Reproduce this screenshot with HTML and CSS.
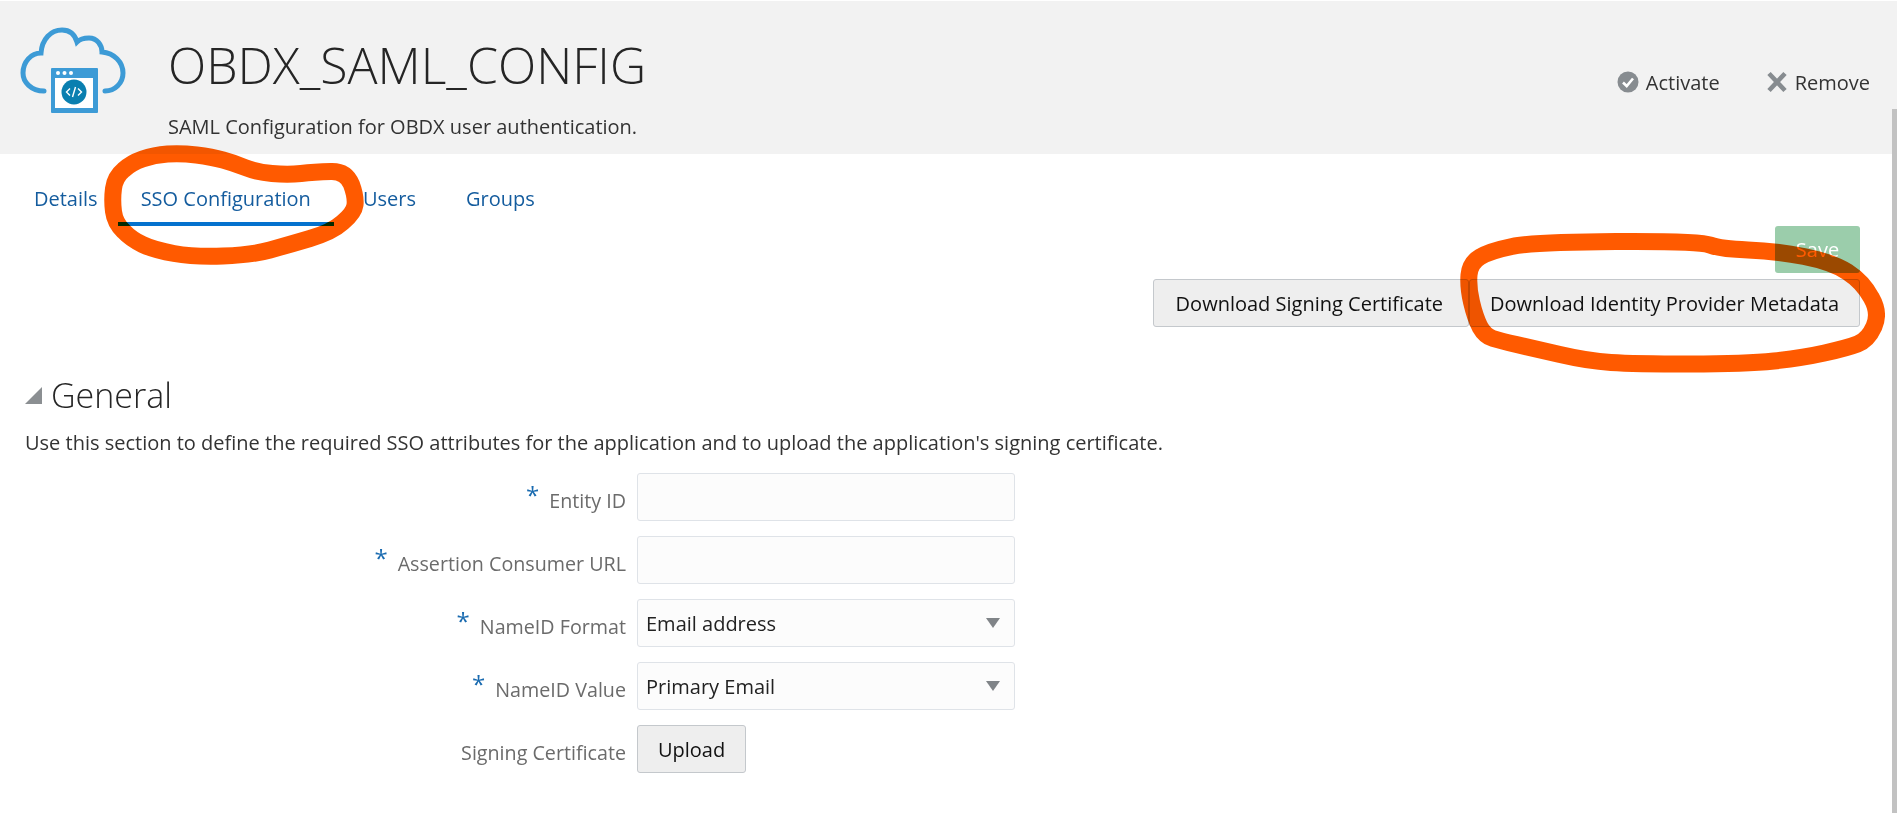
FILE: index.html
```html
<!DOCTYPE html>
<html lang="en">
<head>
    <meta charset="UTF-8">
    <meta name="viewport" content="width=device-width, initial-scale=1.0">
    <title>OBDX_SAML_CONFIG</title>
    <link rel="stylesheet" href="styles.css">
</head>
<body>
    <header class="app-header">
        <svg class="app-icon" viewBox="0 0 130 110" width="130" height="110" aria-hidden="true">
            <path d="M34 76C21 76 13 67 13 58C13 47 21 38 31 38C32 24 41 15 52 15C60 15 65 20 67 27C70 24 75 23 79 23C87 23 92 30 92 37C104 38 113 47 113 58C113 68 105 76 95 76" fill="none" stroke="#3d9bd6" stroke-width="5" stroke-linecap="round"/>
            <rect x="41" y="53" width="47" height="45" rx="1" fill="#3d9bd6"/>
            <rect x="45" y="63" width="38" height="30" fill="#fff"/>
            <circle cx="48" cy="58" r="2" fill="#fff"/>
            <circle cx="54.5" cy="58" r="2" fill="#fff"/>
            <circle cx="61" cy="58" r="2" fill="#fff"/>
            <circle cx="64" cy="77" r="12.5" fill="#0a7fb0"/>
            <path d="M60 73.5L56.5 77L60 80.5M68 73.5L71.5 77L68 80.5M65.5 72L62.5 82" fill="none" stroke="#fff" stroke-width="1.4"/>
        </svg>
        <div class="app-title">
            <h1>OBDX_SAML_CONFIG</h1>
            <p>SAML Configuration for OBDX user authentication.</p>
        </div>
        <div class="app-actions">
            <a class="action" href="#">
                <svg viewBox="0 0 22 22" width="22" height="22" aria-hidden="true">
                    <circle cx="11" cy="11" r="10.5" fill="#878c90"/>
                    <path d="M6 11.5L9.7 15L16 7.5" fill="none" stroke="#fff" stroke-width="2.6"/>
                </svg>
                Activate
            </a>
            <a class="action" href="#">
                <svg viewBox="0 0 22 22" width="22" height="22" aria-hidden="true">
                    <path d="M3 2.5L19 19.5M19 2.5L3 19.5" fill="none" stroke="#878c90" stroke-width="4.6"/>
                </svg>
                Remove
            </a>
        </div>
    </header>

    <nav class="tabs">
        <a class="tab" href="#">Details</a>
        <a class="tab tab-active" href="#">SSO Configuration</a>
        <a class="tab" href="#">Users</a>
        <a class="tab" href="#">Groups</a>
    </nav>

    <div class="toolbar">
        <button class="btn-save" disabled>Save</button>
        <div class="toolbar-row">
            <button class="btn btn-cert">Download Signing Certificate</button>
            <button class="btn">Download Identity Provider Metadata</button>
        </div>
    </div>

    <section class="section">
        <h2 class="section-title"><span class="twisty"></span>General</h2>
        <p class="section-text">Use this section to define the required SSO attributes for the application and to upload the application's signing certificate.</p>
        <form class="form">
            <label class="field-label"><span class="req">*</span>Entity ID</label>
            <input class="field" type="text">
            <label class="field-label"><span class="req">*</span>Assertion Consumer URL</label>
            <input class="field" type="text">
            <label class="field-label"><span class="req">*</span>NameID Format</label>
            <div class="select-wrap">
                <select class="field">
                    <option>Email address</option>
                </select>
            </div>
            <label class="field-label"><span class="req">*</span>NameID Value</label>
            <div class="select-wrap">
                <select class="field">
                    <option>Primary Email</option>
                </select>
            </div>
            <label class="field-label">Signing Certificate</label>
            <div><button class="btn btn-upload" type="button">Upload</button></div>
        </form>
    </section>

    <div class="scrollbar"></div>

    <!-- hand-drawn marker circles on top of the screenshot -->
    <svg class="marker" viewBox="0 0 1897 813" width="1897" height="813" aria-hidden="true">
        <path d="M113.5 188.5Q115 177 123.5 170Q131 163 142.5 159Q154 155 167.5 154Q181 153 196.5 155Q212 157 223 160Q234 163 245 167.5Q256 172 272 173.5Q288 175 301 173.5Q314 172 331 171.5Q346 171 351.5 184.5Q356 197 355 205Q354 213 342.5 222.5Q332 232 310 238.5Q288 245 270 250Q252 255 223 256Q194 257 174 253.5Q154 250 142.5 244.5Q131 239 123.5 231Q115 223 113.5 211.5Q112 200 113.5 188.5Z"/>
        <path d="M1512 246.5Q1534 242 1616 241.5Q1700 241 1710 245Q1720 249 1748 250Q1776 251 1804 256.5Q1832 262 1847.5 272Q1863 282 1871.5 298Q1880 313 1874 326.5Q1868 340 1857.5 344Q1847 348 1824.5 353Q1802 358 1774 361Q1746 364 1690 364Q1634 364 1611 362.5Q1588 361 1560 354.5Q1532 348 1516.5 344.5Q1501 341 1493 338.5Q1485 336 1480 327Q1475 317 1471.5 302Q1468 287 1469 275Q1470 263 1480 257Q1490 251 1512 246.5Z"/>
    </svg>
</body>
</html>
```

FILE: styles.css
```css
body {
    font-family: "Open Sans", "Noto Sans", sans-serif;
    font-size: 20px;
    color: #333;
    background-color: #fff;
    margin: 0;
    padding: 0;
    height: 813px;
    overflow: hidden;
}

.app-header {
    display: flex;
    height: 153px;
    margin-top: 1px;
    background-color: #f2f2f2;
    padding-left: 10px;
    padding-right: 27px;
}

.app-icon {
    flex: none;
    margin-top: 14px;
}

.app-title {
    margin-left: 28px;
    flex: 1;
}

.app-title h1 {
    margin: 31px 0 0;
    font-size: 50px;
    line-height: 66px;
    font-weight: 300;
    color: #252525;
}

.app-title p {
    margin: 16px 0 0;
    font-size: 20px;
    line-height: 26px;
}

.app-actions {
    display: flex;
    gap: 46px;
    padding-top: 67px;
}

.action {
    display: flex;
    align-items: center;
    gap: 7px;
    height: 28px;
    color: #333;
    text-decoration: none;
    font-size: 20px;
}

.tabs {
    display: flex;
    gap: 4px;
    height: 72px;
    padding-left: 11px;
}

.tab {
    box-sizing: border-box;
    height: 72px;
    padding: 31px 23px 0;
    line-height: 28px;
    color: #145c9e;
    text-decoration: none;
    font-size: 20px;
}

.tab-active {
    margin: 0 2px 0 -7px;
    border-bottom: 4px solid #0572ce;
}

.toolbar {
    display: flex;
    flex-direction: column;
    align-items: flex-end;
    gap: 6px;
    padding-right: 37px;
}

.btn-save {
    width: 85px;
    height: 47px;
    border: 0;
    border-radius: 3px;
    background-color: #9bcdab;
    color: #fff;
    font-family: inherit;
    font-size: 20px;
}

.toolbar-row {
    display: flex;
}

.btn {
    height: 48px;
    padding: 0 20px;
    border: 1px solid #c4c8cc;
    border-radius: 3px;
    background-color: #eee;
    color: #111;
    font-family: inherit;
    font-size: 20px;
}

.btn-cert {
    padding: 0 25px 0 22px;
}

.btn-upload {
    width: 109px;
    padding: 0;
}

.section {
    padding: 46px 25px 0;
}

.section-title {
    display: flex;
    align-items: center;
    margin: 0;
    height: 44px;
    font-size: 34px;
    font-weight: 300;
    color: #252525;
}

.twisty {
    width: 0;
    height: 0;
    margin-right: 9px;
    border-left: 17px solid transparent;
    border-bottom: 17px solid #8b8f92;
}

.section-text {
    margin: 13px 0 0;
    line-height: 26px;
    font-size: 20px;
}

.form {
    display: grid;
    grid-template-columns: 601px 378px;
    gap: 15px 11px;
    margin-top: 17px;
}

.field-label {
    align-self: center;
    padding-top: 6px;
    text-align: right;
    color: #6b6b6b;
    font-size: 19.7px;
    white-space: nowrap;
}

.req {
    margin-right: 10px;
    color: #1a6bb0;
    font-size: 24px;
    line-height: 18px;
    position: relative;
    top: -4px;
}

.field {
    box-sizing: border-box;
    display: block;
    width: 378px;
    height: 48px;
    padding: 0 8px;
    border: 1px solid #dfe3e8;
    border-radius: 3px;
    background-color: #fcfcfc;
    color: #222;
    font-family: inherit;
    font-size: 20px;
    appearance: none;
}

.select-wrap {
    position: relative;
}

.select-wrap::after {
    content: "";
    position: absolute;
    top: 19px;
    right: 15px;
    border-left: 7px solid transparent;
    border-right: 7px solid transparent;
    border-top: 10px solid #808488;
}

.scrollbar {
    position: absolute;
    top: 109px;
    right: 0;
    bottom: 0;
    width: 5px;
    background-color: #c2c2c2;
}

.marker {
    position: absolute;
    top: 0;
    left: 0;
    mix-blend-mode: multiply;
    pointer-events: none;
}

.marker path {
    fill: none;
    stroke: #ff5a00;
    stroke-width: 17;
    stroke-linejoin: round;
}
```
